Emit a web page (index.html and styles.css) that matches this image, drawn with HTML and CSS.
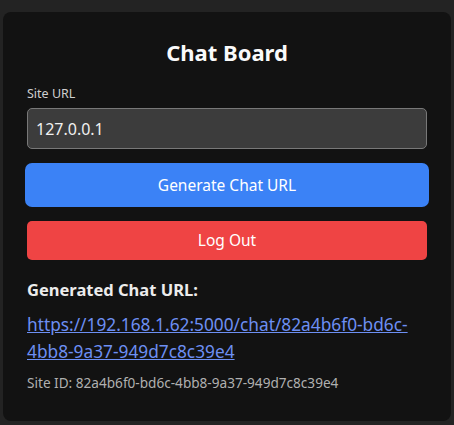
FILE: index.html
```html
<!DOCTYPE html>
<html>
<head>
<meta charset="utf-8">
<link rel="stylesheet" href="styles.css">
</head>
<body>
<div class="card">
  <h1 class="title">Chat Board</h1>
  <label class="label" for="site">Site URL</label>
  <input class="input" id="site" type="text" value="127.0.0.1">
  <button class="btn btn-primary">Generate Chat URL</button>
  <button class="btn btn-danger">Log Out</button>
  <h2 class="subtitle">Generated Chat URL:</h2>
  <a class="link" href="#">https://192.168.1.62:5000/chat/82a4b6f0-bd6c-4bb8-9a37-949d7c8c39e4</a>
  <p class="meta">Site ID: 82a4b6f0-bd6c-4bb8-9a37-949d7c8c39e4</p>
</div>
</body>
</html>
```
FILE: styles.css
```css
html, body {
  margin: 0;
  padding: 0;
  background: #232323;
}
body {
  padding: 12px 3px 4px 3px;
  font-family: "Noto Sans", "Open Sans", sans-serif;
  color: #f2f2f2;
}
.card {
  background: #121212;
  border-radius: 8px;
  padding: 22px 24px 28px 24px;
  display: flex;
  flex-direction: column;
  height: 409px;
  box-sizing: border-box;
}
.title {
  margin: 0;
  text-align: center;
  font-size: 22px;
  font-weight: 700;
  line-height: 36px;
  color: #fafafa;
}
.label {
  margin-top: 14px;
  font-size: 12.5px;
  color: #cfcfcf;
  line-height: 20px;
}
.input {
  margin-top: 4px;
  height: 42px;
  box-sizing: border-box;
  background: #3c3c3c;
  border: 1px solid #787878;
  border-radius: 5px;
  color: #f0f0f0;
  font-family: inherit;
  font-size: 16px;
  padding: 0 8px;
  outline: none;
}
.btn {
  border: none;
  font-family: inherit;
  font-size: 15.5px;
  color: #fff;
  cursor: pointer;
}
.btn-primary {
  margin: 14px -2px 0 -2px;
  height: 44px;
  background: #3b82f6;
  border-radius: 7px;
}
.btn-danger {
  margin-top: 14px;
  height: 40px;
  background: #ef4444;
  border-radius: 5px;
}
.subtitle {
  margin: 18px 0 0 0;
  font-size: 16.5px;
  font-weight: 700;
  line-height: 24px;
  color: #ececec;
}
.link {
  margin-top: 9px;
  font-size: 17.3px;
  line-height: 27px;
  color: #6d8ff3;
  overflow-wrap: break-word;
}
.meta {
  margin: 8px 0 0 0;
  font-size: 13.6px;
  line-height: 20px;
  color: #b0b0b0;
}
```
